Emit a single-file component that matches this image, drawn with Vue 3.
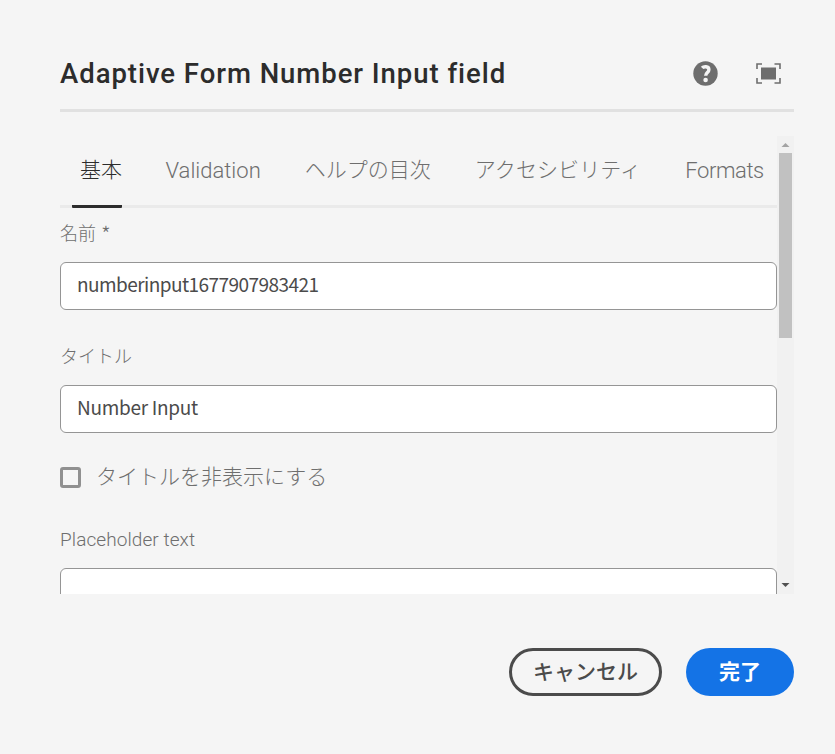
<script setup>
import { ref } from 'vue'

const tabs = [
  { label: '基本', cls: 'basic' },
  { label: 'Validation', cls: 'latin validation' },
  { label: 'ヘルプの目次', cls: 'help-toc' },
  { label: 'アクセシビリティ', cls: 'accessibility' },
  { label: 'Formats', cls: 'latin formats' },
]
const active = ref(0)
const name = ref('numberinput1677907983421')
const title = ref('Number Input')
const placeholder = ref('')
const hideTitle = ref(false)
</script>

<template>
  <main class="dialog" lang="ja">
    <header class="header">
      <h1>Adaptive Form Number Input field</h1>
      <button class="icon help" aria-label="Help">
        <svg width="26" height="26" viewBox="0 0 26 26">
          <circle cx="12.5" cy="12.5" r="12.2" fill="#6e6e6e" />
          <path d="M9.1 6.9C10.5 5.4 15.9 4.7 15.9 8.7C15.9 11.5 12.7 11.6 12.7 14.7" fill="none" stroke="#f5f5f5" stroke-width="3.4" />
          <circle cx="12.6" cy="19" r="2.3" fill="#f5f5f5" />
        </svg>
      </button>
      <button class="icon" aria-label="Fullscreen">
        <svg width="26" height="22" viewBox="0 0 26 22">
          <rect x="5" y="4.5" width="15" height="12" fill="#6e6e6e" />
          <path d="M1 6V1H6M18.5 1H24V6M24 15V20H18.5M6 20H1V15" fill="none" stroke="#6e6e6e" stroke-width="1.6" />
        </svg>
      </button>
    </header>

    <section class="viewport">
      <div class="content">
        <nav class="tabs">
          <a
            v-for="(tab, i) in tabs"
            :key="tab.label"
            class="tab"
            :class="[tab.cls, { active: i === active }]"
            @click="active = i"
          ><span>{{ tab.label }}</span></a>
        </nav>
        <label class="label name-label">名前 <span class="required">*</span></label>
        <input v-model="name" class="field name-field" type="text" />
        <label class="label title-label">タイトル</label>
        <input v-model="title" class="field title-field" type="text" />
        <label class="check">
          <input v-model="hideTitle" type="checkbox" />
          <span>タイトルを非表示にする</span>
        </label>
        <label class="label latin placeholder-label">Placeholder text</label>
        <input v-model="placeholder" class="field" type="text" />
      </div>
      <div class="scrollbar">
        <svg class="arrow" width="17" height="17" viewBox="0 0 17 17"><path d="M4.5 11L8.5 7L12.5 11Z" fill="#a3a3a3" /></svg>
        <div class="thumb"></div>
        <svg class="arrow" width="17" height="17" viewBox="0 0 17 17"><path d="M4.5 6L8.5 10L12.5 6Z" fill="#505050" /></svg>
      </div>
    </section>

    <footer class="footer">
      <button class="btn cancel"><span>キャンセル</span></button>
      <button class="btn done"><span>完了</span></button>
    </footer>
  </main>
</template>

<style>
body {
  background: #f5f5f5;
}
</style>

<style scoped>
* {
  box-sizing: border-box;
}
.dialog {
  width: 835px;
  height: 754px;
  padding: 0 41px 0 60px;
  background: #f5f5f5;
  font-family: "Noto Sans CJK JP", sans-serif;
  font-weight: 300;
  color: #6e6e6e;
  overflow: hidden;
}
.header {
  display: flex;
  align-items: center;
  height: 112px;
  padding: 38px 12px 0 0;
  border-bottom: 3px solid #e1e1e1;
}
h1 {
  flex: 1;
  margin: 0;
  font: 500 27.5px/40px Roboto, sans-serif;
  letter-spacing: 0.96px;
  color: #2c2c2c;
  white-space: nowrap;
}
.icon {
  display: flex;
  padding: 0;
  border: 0;
  background: none;
}
.help {
  margin-right: 37px;
}
.viewport {
  display: flex;
  height: 458px;
  margin-top: 24px;
  overflow: hidden;
}
.content {
  display: flex;
  flex-direction: column;
  width: 717px;
}
.tabs {
  display: flex;
  flex: none;
  gap: 36px;
  height: 72px;
  padding-left: 12px;
  border-bottom: 3px solid #eaeaea;
  white-space: nowrap;
}
.tab {
  flex: none;
  height: 72px;
  padding: 0 0 0 8px;
  font-size: 21px;
  line-height: 65px;
}
.tab.active {
  width: 50px;
  color: #2c2c2c;
  border-bottom: 3px solid #2c2c2c;
  border-radius: 1px;
}
.tab.latin {
  font-size: 22px;
  line-height: 69px;
}
.tab.validation {
  padding-left: 7.5px;
}
.accessibility {
  letter-spacing: 0.1px;
}
.formats {
  letter-spacing: -0.4px;
}
.latin {
  font-family: Roboto, sans-serif;
}
.label {
  flex: none;
  height: 54px;
  font-size: 18px;
  line-height: 48px;
}
.required {
  margin-left: 1px;
  font-size: 22px;
  line-height: 1;
  vertical-align: -3px;
}
.field {
  flex: none;
  width: 717px;
  height: 48px;
  padding: 0 16px 5px;
  border: 1px solid #959595;
  border-radius: 6px;
  background: #fff;
  font: 400 19px "Noto Sans CJK JP", sans-serif;
  color: #4b4b4b;
  outline: 0;
}
.name-field {
  letter-spacing: -0.55px;
}
.title-field {
  letter-spacing: -0.3px;
}
.title-label {
  height: 75px;
  padding-top: 21px;
}
.check {
  display: flex;
  align-items: center;
  flex: none;
  height: 89px;
  font-size: 21px;
}
.check input {
  width: 21px;
  height: 21px;
  margin: 0 15px 0 0;
  appearance: none;
  border: 3px solid #909090;
  border-radius: 3px;
}
.check span {
  padding-bottom: 5px;
}
.placeholder-label {
  height: 46px;
  font-size: 19px;
  line-height: 35px;
  letter-spacing: 0.08px;
}
.scrollbar {
  display: flex;
  flex-direction: column;
  width: 17px;
  background: #f1f1f1;
}
.arrow {
  display: block;
  flex: none;
}
.arrow:last-child {
  margin-top: auto;
}
.thumb {
  width: 13px;
  height: 185px;
  margin-left: 2px;
  background: #c1c1c1;
}
.footer {
  display: flex;
  justify-content: flex-end;
  gap: 24px;
  margin-top: 54px;
}
.btn {
  height: 48px;
  padding: 0 0 4px;
  border: 0;
  border-radius: 24px;
  font: 700 21px "Noto Sans CJK JP", sans-serif;
}
.cancel {
  width: 153px;
  border: 3px solid #4b4b4b;
  background: transparent;
  color: #4b4b4b;
  font-weight: 500;
}
.done {
  width: 108px;
  background: #1473e6;
  color: #fff;
}
</style>
